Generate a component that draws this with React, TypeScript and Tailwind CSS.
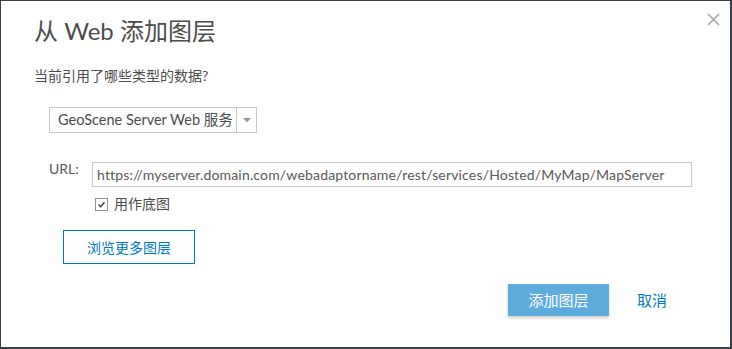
const font = { fontFamily: '"Lato", "Noto Sans CJK SC", sans-serif' }

function CloseIcon() {
  return (
    <svg width="13" height="13" viewBox="0 0 13 13" className="block">
      <path d="M1 1 L12 12 M12 1 L1 12" stroke="#a8a8a8" strokeWidth="1.6" fill="none" />
    </svg>
  )
}

function CheckBox() {
  return (
    <span className="flex h-[13px] w-[13px] items-center justify-center border border-[#8f8f8f] bg-white">
      <svg width="9" height="9" viewBox="0 0 9 9">
        <path d="M1.5 4.5 L3.7 6.7 L7.5 2.2" stroke="#444" strokeWidth="1.5" fill="none" />
      </svg>
    </span>
  )
}

export default function App() {
  return (
    <div
      className="relative flex h-[349px] w-[732px] flex-col border-t border-l border-r-2 border-b-2 border-[#3c4148] bg-white text-[#4c4c4c]"
      style={font}
    >
      <button className="absolute top-[12px] right-[10px]">
        <CloseIcon />
      </button>

      <div className="flex flex-col pl-[33px]">
        <h1 className="mt-[14px] text-[24px] leading-[32px] font-normal text-[#4c4c4c]">从 Web 添加图层</h1>
        <p className="mt-[19px] text-[14px] leading-[20px] text-[#4c4c4c]">当前引用了哪些类型的数据?</p>

        <div className="mt-[21px] ml-[15px] flex h-[26px] w-[208px] items-stretch border border-[#c8c8c8]">
          <div className="flex flex-1 items-center pl-[8px] text-[14.5px] whitespace-nowrap text-[#4c4c4c]">
            GeoScene Server Web 服务
          </div>
          <div className="flex w-[20px] shrink-0 items-center justify-center border-l border-[#c8c8c8]">
            <svg width="8" height="5" viewBox="0 0 8 5">
              <path d="M0 0 L8 0 L4 4.5 Z" fill="#9a9a9a" />
            </svg>
          </div>
        </div>

        <div className="mt-[29px] ml-[15px] flex items-start gap-[10px]">
          <span className="-mt-[1px] w-[33px] text-[14px] leading-[16px] text-[#595959]">URL:</span>
          <div className="flex h-[25px] w-[600px] items-center border border-[#c8c8c8] pl-[4px] text-[14px] tracking-[0.17px] whitespace-nowrap text-[#595959]">
            https://myserver.domain.com/webadaptorname/rest/services/Hosted/MyMap/MapServer
          </div>
        </div>

        <label className="mt-[9px] ml-[61px] flex items-center gap-[6px] text-[14px] text-[#4c4c4c]">
          <CheckBox />
          <span className="leading-[16px]">用作底图</span>
        </label>

        <button className="mt-[18px] ml-[29px] flex h-[34px] w-[132px] items-center justify-center border border-[#0079c1] text-[14px] text-[#0079c1]">
          浏览更多图层
        </button>
      </div>

      <div className="mt-[20px] flex items-center justify-end pr-[63px]">
        <button className="flex h-[32px] w-[101px] items-center justify-center bg-[#5dacdc] text-[15px] text-white shadow-[0_2px_3px_rgba(0,0,0,0.2)]">
          添加图层
        </button>
        <button className="ml-[28px] text-[15px] text-[#0079c1]">取消</button>
      </div>
    </div>
  )
}
